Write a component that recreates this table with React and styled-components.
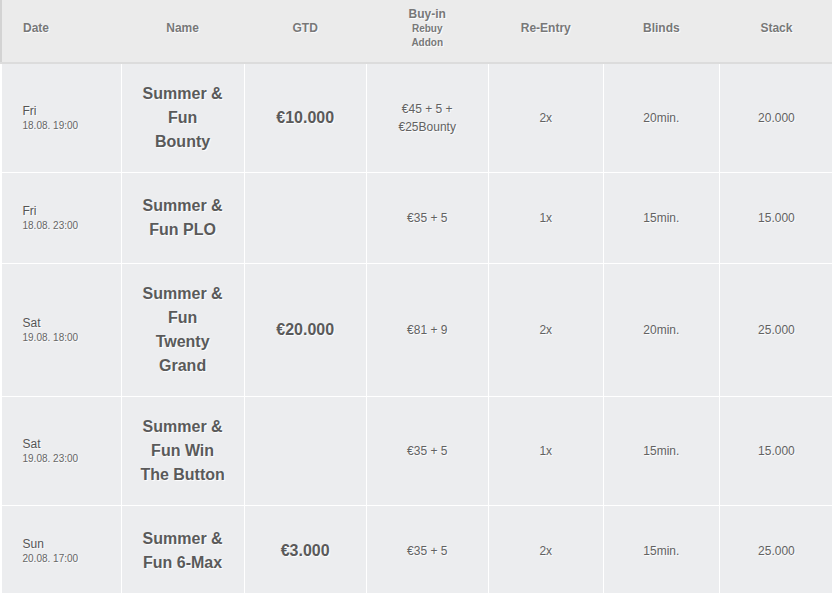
import React from "react";
import styled, { createGlobalStyle } from "styled-components";

const Global = createGlobalStyle`
  html, body { margin: 0; padding: 0; background: #ffffff; }
  body { font-family: "Liberation Sans", Arial, sans-serif; overflow: hidden; }
`;

const Wrap = styled.div`
  width: 832px;
  height: 593px;
  overflow: hidden;
`;

const Table = styled.table`
  width: 834px;
  table-layout: fixed;
  border-collapse: collapse;
  border-spacing: 0;
  text-shadow: 1px 1px 1px #ffffff;
`;

const Head = styled.thead`
  background: #ebebeb;
`;

const HeadRow = styled.tr`
  height: 63px;
  border-left: 2px solid #d3d3d3;
  border-bottom: 2px solid #dcdcdc;
`;

const Th = styled.th`
  padding: 0 0 6px 0;
  font-size: 12px;
  font-weight: bold;
  color: #787878;
  text-align: ${(p) => (p.$left ? "left" : "center")};
  padding-left: ${(p) => (p.$left ? "21px" : "0")};
  vertical-align: middle;
  line-height: 14px;
`;

const BuyTh = styled(Th)`
  vertical-align: top;
  padding: 6px 0 0 0;
`;

const SubHead = styled.span`
  display: block;
  font-size: 10px;
  line-height: 14px;
`;

const BuyHead = styled.span`
  display: block;
  line-height: 16px;
`;

const Row = styled.tr`
  background: #ecedef;
`;

const Td = styled.td`
  border: 1px solid #ffffff;
  height: 54px;
  padding: 18px 6px;
  font-size: 12px;
  color: #626262;
  text-align: center;
  vertical-align: middle;
  line-height: 18px;
`;

const DateCell = styled(Td)`
  text-align: left;
  padding-left: 21px;
`;

const Day = styled.div`
  font-size: 12px;
  line-height: 16px;
  color: #555555;
`;

const Time = styled.div`
  font-size: 10px;
  line-height: 14px;
  color: #666666;
`;

const NameCell = styled(Td)`
  font-size: 16px;
  font-weight: bold;
  line-height: 24px;
  color: #5a5a5a;
  padding-left: 18px;
  padding-right: 18px;
`;

const GtdCell = styled(Td)`
  font-size: 16px;
  font-weight: bold;
  color: #5a5a5a;
`;

const rows = [
  { day: "Fri", time: "18.08. 19:00", name: ["Summer &", "Fun", "Bounty"], gtd: "€10.000", buy: ["€45 + 5 +", "€25Bounty"], re: "2x", blinds: "20min.", stack: "20.000" },
  { day: "Fri", time: "18.08. 23:00", name: ["Summer &", "Fun PLO"], gtd: "", buy: ["€35 + 5"], re: "1x", blinds: "15min.", stack: "15.000" },
  { day: "Sat", time: "19.08. 18:00", name: ["Summer &", "Fun", "Twenty", "Grand"], gtd: "€20.000", buy: ["€81 + 9"], re: "2x", blinds: "20min.", stack: "25.000" },
  { day: "Sat", time: "19.08. 23:00", name: ["Summer &", "Fun Win", "The Button"], gtd: "", buy: ["€35 + 5"], re: "1x", blinds: "15min.", stack: "15.000" },
  { day: "Sun", time: "20.08. 17:00", name: ["Summer &", "Fun 6-Max"], gtd: "€3.000", buy: ["€35 + 5"], re: "2x", blinds: "15min.", stack: "25.000" },
];

const Line = styled.span`
  display: block;
`;

export default function App() {
  return (
    <Wrap>
      <Global />
      <Table>
        <colgroup>
          <col style={{ width: 120 }} />
          <col style={{ width: 123 }} />
          <col style={{ width: 122 }} />
          <col style={{ width: 122 }} />
          <col style={{ width: 115 }} />
          <col style={{ width: 116 }} />
          <col style={{ width: 114 }} />
        </colgroup>
        <Head>
          <HeadRow>
            <Th $left>Date</Th>
            <Th>Name</Th>
            <Th>GTD</Th>
            <BuyTh>
              <BuyHead>Buy-in</BuyHead>
              <SubHead>Rebuy</SubHead>
              <SubHead>Addon</SubHead>
            </BuyTh>
            <Th>Re-Entry</Th>
            <Th>Blinds</Th>
            <Th>Stack</Th>
          </HeadRow>
        </Head>
        <tbody>
          {rows.map((r, i) => (
            <Row key={i}>
              <DateCell>
                <Day>{r.day}</Day>
                <Time>{r.time}</Time>
              </DateCell>
              <NameCell>
                {r.name.map((n, j) => (
                  <Line key={j}>{n}</Line>
                ))}
              </NameCell>
              <GtdCell>{r.gtd}</GtdCell>
              <Td>
                {r.buy.map((b, j) => (
                  <Line key={j}>{b}</Line>
                ))}
              </Td>
              <Td>{r.re}</Td>
              <Td>{r.blinds}</Td>
              <Td>{r.stack}</Td>
            </Row>
          ))}
        </tbody>
      </Table>
    </Wrap>
  );
}
